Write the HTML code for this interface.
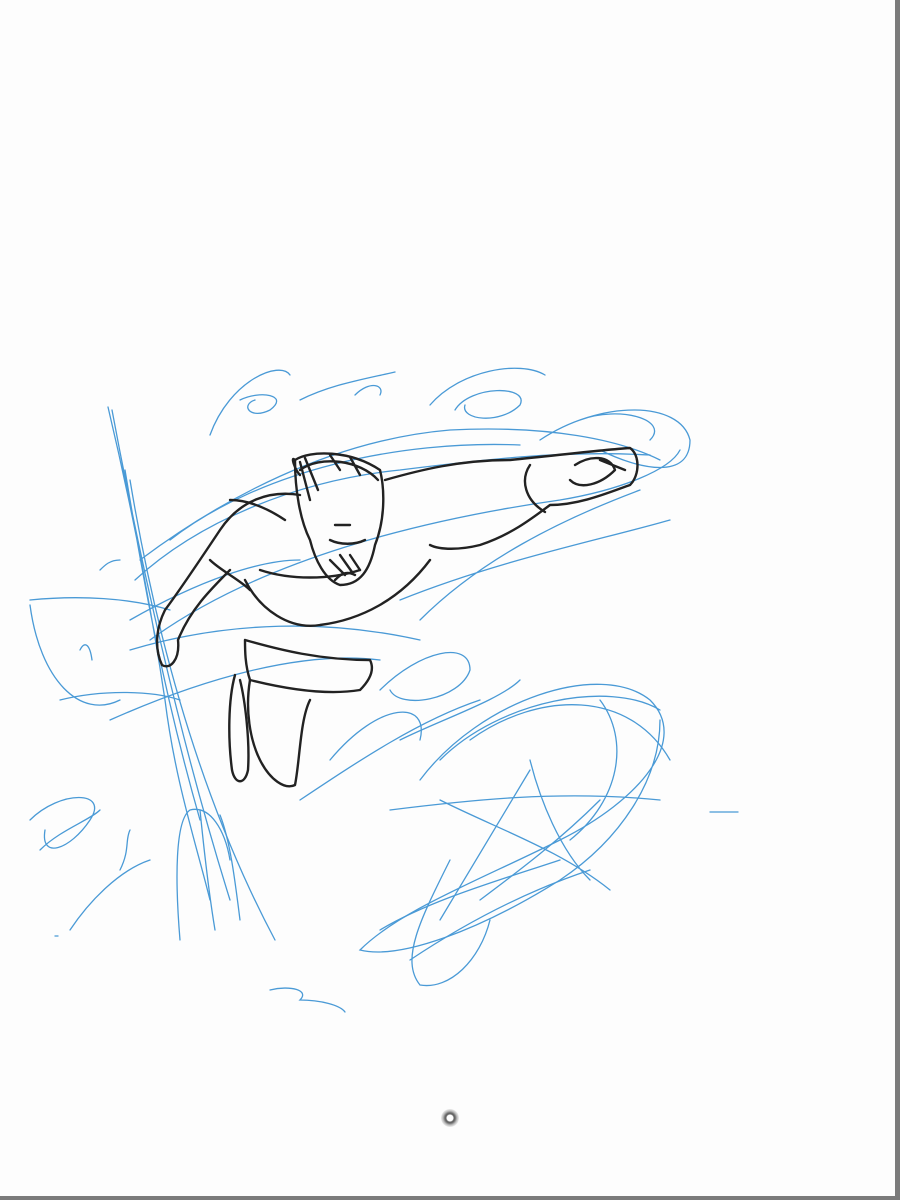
<!DOCTYPE html>
<html><head><meta charset="utf-8"><style>
html,body{margin:0;padding:0;width:900px;height:1200px;overflow:hidden;background:#fdfdfd}
.r{position:absolute;right:0;top:0;width:5px;height:1200px;background:#7b7b7b}
.b{position:absolute;left:0;bottom:0;width:900px;height:4px;background:#7b7b7b}
.btn{position:absolute;left:441px;top:1109px;width:18px;height:18px;border-radius:50%;background:radial-gradient(circle,#fff 0 3px,#666 4px 5px,#bbb 7px,#eee 9px)}
svg{position:absolute;left:0;top:0}
</style></head><body>
<svg width="900" height="1200" viewBox="0 0 900 1200">
<g fill="none" stroke="#4a9ad6" stroke-width="1.3" stroke-linecap="round">
<path d="M210 435 C230 380 280 360 290 375 M240 400 C260 390 290 395 270 410 C250 420 240 405 255 400"/>
<path d="M300 400 C330 385 360 380 395 372 M355 395 C370 380 385 385 380 395"/>
<path d="M430 405 C460 370 520 360 545 375 M455 410 C470 385 530 385 520 405 C500 425 460 420 465 405"/>
<path d="M540 440 C600 400 680 400 690 440 C690 480 640 470 600 450 M580 420 C620 405 670 420 650 440"/>
<path d="M108 407 C130 500 150 600 165 700 C175 780 195 840 210 900 M112 410 C140 560 180 740 230 900 M130 480 C150 600 190 780 275 940 M125 470 C140 560 160 680 200 820"/>
<path d="M30 600 C80 595 130 598 170 610 M30 605 C40 680 80 720 120 700 M60 700 C100 690 150 690 180 700"/>
<path d="M135 580 C200 520 300 480 400 470 C480 460 560 450 650 455 M150 640 C260 560 420 520 560 500 C620 490 670 470 680 450"/>
<path d="M130 650 C230 620 330 620 420 640 M420 620 C480 560 560 520 640 490 M400 600 C500 560 600 540 670 520"/>
<path d="M140 560 C220 500 330 440 450 430 C550 425 620 440 660 460 M170 540 C260 470 400 440 520 445"/>
<path d="M110 720 C200 680 300 650 380 660 M130 620 C200 580 260 560 300 560"/>
<path d="M380 690 C420 650 470 640 470 670 C460 700 400 710 390 690 M400 740 C440 720 500 700 520 680"/>
<path d="M330 760 C380 700 430 700 420 740 M300 800 C360 760 420 720 480 700"/>
<path d="M420 780 C480 700 600 660 650 700 C690 740 640 800 560 840 C480 880 400 910 360 950 C400 960 480 930 560 880 C620 840 660 780 660 720"/>
<path d="M440 760 C500 700 610 680 660 710 M470 740 C540 690 630 690 670 760 M600 700 C630 740 620 800 570 840"/>
<path d="M390 810 C470 800 560 790 660 800 M440 800 C500 830 560 850 610 890 M530 760 C540 800 560 850 590 880 M530 770 C500 820 470 870 440 920 M600 800 C560 840 520 870 480 900"/>
<path d="M450 860 C420 920 400 960 420 985 C450 990 480 960 490 920 M380 930 C430 900 500 880 560 860 M410 960 C470 920 530 890 590 870"/>
<path d="M30 820 C60 790 110 790 90 820 C70 850 40 860 45 830 M40 850 C60 830 90 820 100 810"/>
<path d="M70 930 C90 900 120 870 150 860 M120 870 C130 850 125 840 130 830"/>
<path d="M180 940 C175 880 175 820 190 810 C210 805 225 830 230 860 M200 810 C205 860 210 900 215 930 M220 815 C230 840 235 880 240 920"/>
<path d="M270 990 C290 985 310 990 300 1000 C320 1000 340 1005 345 1012"/>
<path d="M710 812 C720 812 730 812 738 812 M55 936 L58 936"/>
<path d="M100 570 C105 565 110 560 120 560 M80 650 C85 640 90 645 92 660"/>
</g>
<g fill="none" stroke="#222" stroke-width="2.4" stroke-linecap="round" stroke-linejoin="round">
<path d="M295 460 C310 450 350 450 380 470 C385 490 385 520 375 545 C370 570 360 585 340 585 C325 580 315 560 310 540 C300 520 295 490 295 460"/>
<path d="M300 470 C320 455 360 460 378 480 M295 460 C290 455 295 470 300 475 M300 462 L310 500 M305 458 L318 490 M330 455 L340 470 M350 457 L360 475"/>
<path d="M330 540 C340 545 355 545 365 540 M335 525 L350 525 M355 575 C345 570 340 575 335 580 M330 560 L345 575 M340 555 L352 572 M350 555 L360 570"/>
<path d="M385 480 C420 470 460 460 510 460 C560 455 600 450 630 448 C640 455 640 475 630 485 C610 492 580 505 550 505 C530 520 510 535 480 545 C460 550 440 550 430 545"/>
<path d="M530 465 C520 480 525 500 545 512 M575 465 C590 455 610 455 615 470 C600 485 580 490 570 480 M600 460 L625 470"/>
<path d="M300 495 C270 490 240 500 220 530 C200 560 180 590 165 610 C155 630 155 650 162 665 C170 670 180 660 178 640 C190 610 210 590 230 570"/>
<path d="M245 580 C260 610 290 630 320 625 C360 620 400 600 430 560 M260 570 C290 580 330 580 360 570"/>
<path d="M245 640 C280 650 320 660 370 660 C375 670 370 680 360 690 C330 695 290 690 250 680 C245 665 245 650 245 640"/>
<path d="M250 680 C245 710 250 740 260 760 C270 780 285 790 295 785 C300 760 300 720 310 700"/>
<path d="M235 675 C228 700 228 740 232 770 C235 785 245 785 248 770 C250 740 245 700 240 680"/>
<path d="M230 500 C250 500 270 510 285 520 M210 560 C220 570 240 580 250 590"/>
</g>
</svg>
<div class="btn"></div>
<div class="r"></div><div class="b"></div>
</body></html>
